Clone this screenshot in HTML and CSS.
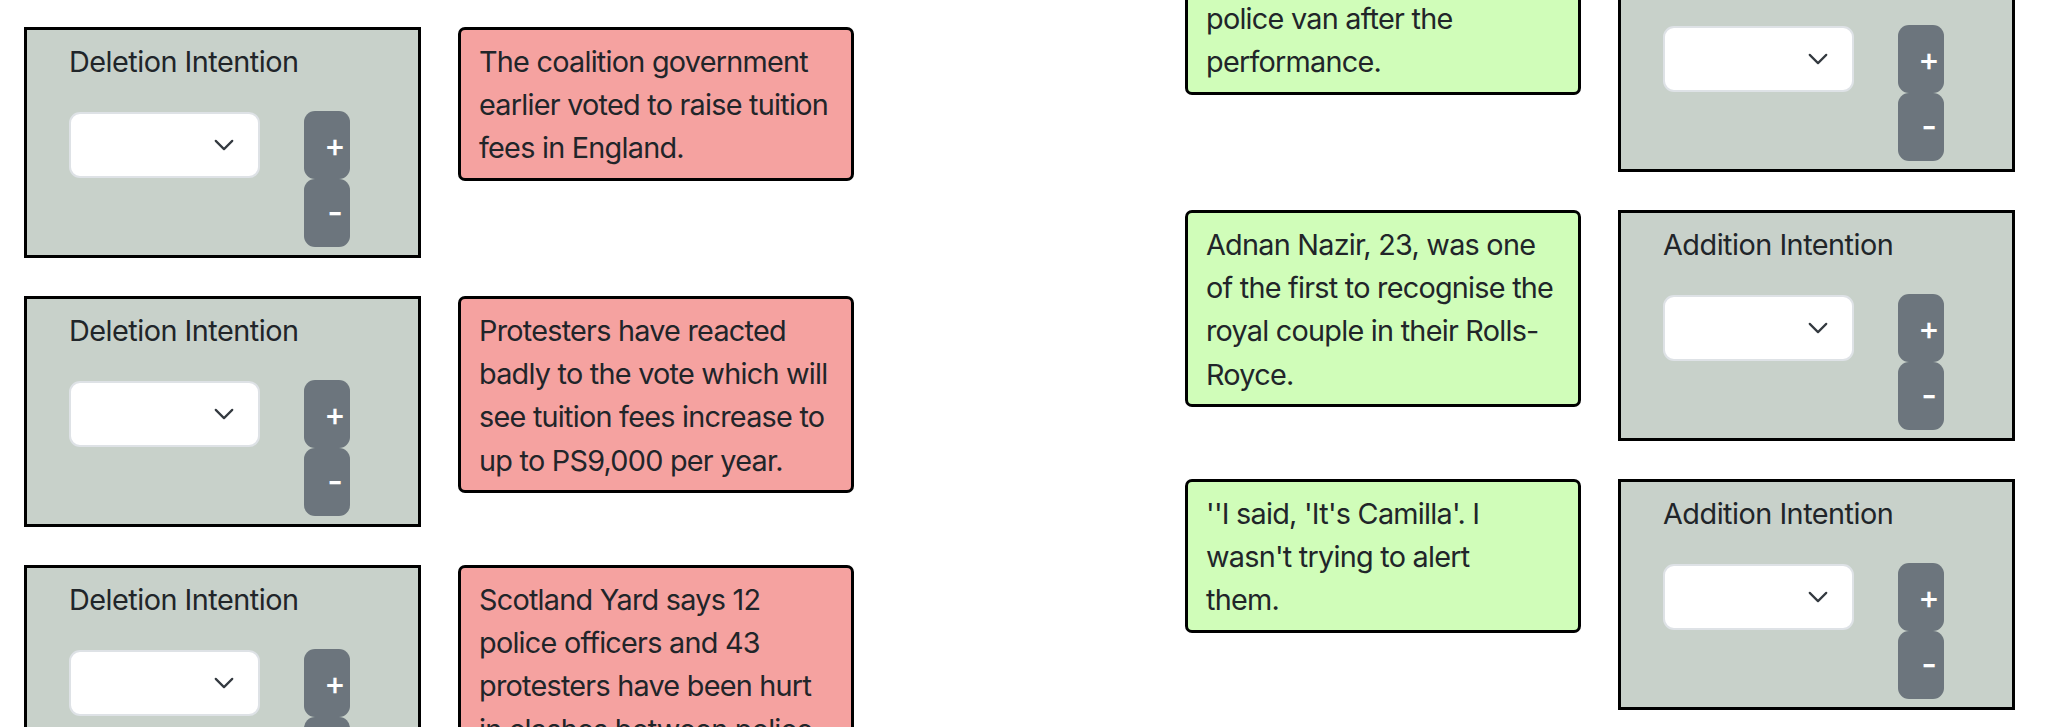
FILE: index.html
```html
<!DOCTYPE html>
<html lang="en">
<head>
<meta charset="utf-8">
<title>Intentions</title>
<link rel="stylesheet" href="styles.css">
</head>
<body>
<div class="page">
  <div class="column column-left">
    <div class="row">
      <div class="control">
        <div class="control-label">Deletion Intention</div>
        <div class="control-body">
          <div class="select"><svg class="chev" viewBox="0 0 16 16" width="22" height="22"><path d="M2 5l6 6 6-6" fill="none" stroke="#343a40" stroke-width="1.6" stroke-linecap="round" stroke-linejoin="round"/></svg></div>
          <div class="btns"><div class="btn">+</div><div class="btn btn-minus">-</div></div>
        </div>
      </div>
      <div class="sentence sentence-del">The coalition government<br>earlier voted to raise tuition<br>fees in England.</div>
    </div>
    <div class="row">
      <div class="control">
        <div class="control-label">Deletion Intention</div>
        <div class="control-body">
          <div class="select"><svg class="chev" viewBox="0 0 16 16" width="22" height="22"><path d="M2 5l6 6 6-6" fill="none" stroke="#343a40" stroke-width="1.6" stroke-linecap="round" stroke-linejoin="round"/></svg></div>
          <div class="btns"><div class="btn">+</div><div class="btn btn-minus">-</div></div>
        </div>
      </div>
      <div class="sentence sentence-del">Protesters have reacted<br>badly to the vote which will<br>see tuition fees increase to<br>up to PS9,000 per year.</div>
    </div>
    <div class="row">
      <div class="control">
        <div class="control-label">Deletion Intention</div>
        <div class="control-body">
          <div class="select"><svg class="chev" viewBox="0 0 16 16" width="22" height="22"><path d="M2 5l6 6 6-6" fill="none" stroke="#343a40" stroke-width="1.6" stroke-linecap="round" stroke-linejoin="round"/></svg></div>
          <div class="btns"><div class="btn">+</div><div class="btn btn-minus">-</div></div>
        </div>
      </div>
      <div class="sentence sentence-del">Scotland Yard says 12<br>police officers and 43<br>protesters have been hurt<br>in clashes between police<br>and protesters.</div>
    </div>
  </div>
  <div class="column column-right">
    <div class="row">
      <div class="sentence sentence-add">The couple were driven away in a<br>police van after the<br>performance.</div>
      <div class="control">
        <div class="control-label">Addition Intention</div>
        <div class="control-body">
          <div class="select"><svg class="chev" viewBox="0 0 16 16" width="22" height="22"><path d="M2 5l6 6 6-6" fill="none" stroke="#343a40" stroke-width="1.6" stroke-linecap="round" stroke-linejoin="round"/></svg></div>
          <div class="btns"><div class="btn">+</div><div class="btn btn-minus">-</div></div>
        </div>
      </div>
    </div>
    <div class="row">
      <div class="sentence sentence-add">Adnan Nazir, 23, was one<br>of the first to recognise the<br>royal couple in their Rolls-<br>Royce.</div>
      <div class="control">
        <div class="control-label">Addition Intention</div>
        <div class="control-body">
          <div class="select"><svg class="chev" viewBox="0 0 16 16" width="22" height="22"><path d="M2 5l6 6 6-6" fill="none" stroke="#343a40" stroke-width="1.6" stroke-linecap="round" stroke-linejoin="round"/></svg></div>
          <div class="btns"><div class="btn">+</div><div class="btn btn-minus">-</div></div>
        </div>
      </div>
    </div>
    <div class="row">
      <div class="sentence sentence-add">''I said, 'It's Camilla'. I<br>wasn't trying to alert<br>them.</div>
      <div class="control">
        <div class="control-label">Addition Intention</div>
        <div class="control-body">
          <div class="select"><svg class="chev" viewBox="0 0 16 16" width="22" height="22"><path d="M2 5l6 6 6-6" fill="none" stroke="#343a40" stroke-width="1.6" stroke-linecap="round" stroke-linejoin="round"/></svg></div>
          <div class="btns"><div class="btn">+</div><div class="btn btn-minus">-</div></div>
        </div>
      </div>
    </div>
  </div>
</div>
</body>
</html>
```
FILE: styles.css
```css
html, body {
  margin: 0;
  padding: 0;
  background: #ffffff;
  height: 727px;
  overflow: hidden;
}

body {
  font-family: Inter, "Liberation Sans", sans-serif;
  font-size: 28.8px;
  line-height: 1.5;
  color: #212529;
  letter-spacing: -0.75px;
}

.page {
  display: flex;
  justify-content: space-between;
  padding: 0 33px 0 24px;
}

.column {
  display: flex;
  flex-direction: column;
  gap: 38px;
}

.column-left {
  padding-top: 27px;
}

.column-right {
  margin-top: -59px;
}

.row {
  display: flex;
  align-items: flex-start;
  gap: 37px;
}

.control {
  box-sizing: border-box;
  width: 397px;
  height: 231px;
  border: 3px solid #000;
  background: #c8d1ca;
  padding: 10px 0 7px 42px;
}

.control-label {
  height: 43px;
  letter-spacing: -0.5px;
}

.control-body {
  display: flex;
  align-items: flex-start;
  margin-top: 28px;
}

.select {
  box-sizing: border-box;
  width: 191px;
  height: 66px;
  margin-top: 1px;
  background: #fff;
  border: 2px solid #dee2e6;
  border-radius: 11px;
  display: flex;
  align-items: center;
  justify-content: flex-end;
  padding-right: 23px;
}

.chev {
  display: block;
}

.btns {
  margin-left: 44px;
  display: flex;
  flex-direction: column;
}

.btn {
  box-sizing: border-box;
  width: 46px;
  height: 68px;
  background: #6c757d;
  color: #fff;
  border-radius: 11px;
  font-size: 32px;
  font-weight: 500;
  letter-spacing: 0;
  display: flex;
  align-items: center;
  justify-content: center;
  padding-left: 16px;
  padding-top: 2px;
}

.btn-minus {
  font-size: 34px;
  padding-top: 0;
  padding-bottom: 4px;
}

.sentence {
  box-sizing: border-box;
  width: 396px;
  border: 3px solid #000;
  border-radius: 7px;
  padding: 10px 10px 8px 18px;
  white-space: nowrap;
}

.sentence-del {
  background: #f5a2a0;
}

.sentence-add {
  background: #d0fdb9;
}
```
